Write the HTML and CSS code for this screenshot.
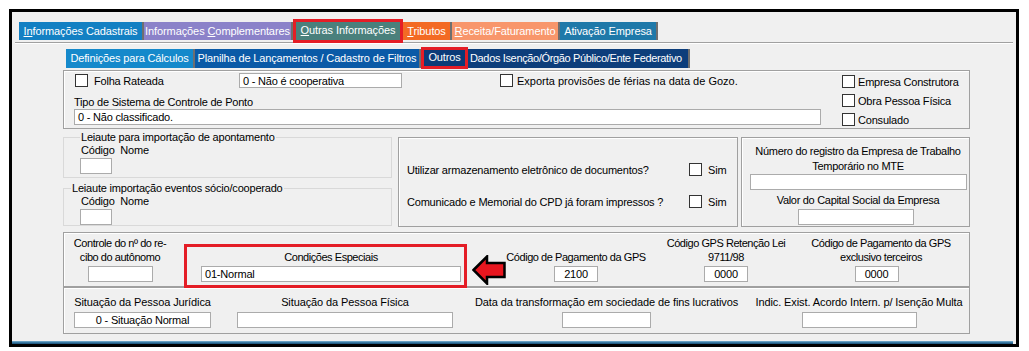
FILE: index.html
```html
<!DOCTYPE html>
<html>
<head>
    <meta charset="utf-8">
    <title>Outras Informações</title>
    <link rel="stylesheet" href="styles.css">
</head>
<body>
    <div class="window">
        <div class="main-tabs">
            <span class="tab t-cad"><u>In</u>formações Cadastrais</span>
            <span class="tab t-comp">Informações <u>C</u>omplementares</span>
            <span class="tab t-outras active"><u>O</u>utras Informações</span>
            <span class="tab t-trib"><u>T</u>ributos</span>
            <span class="tab t-rec"><u>R</u>eceita/Faturamento</span>
            <span class="tab t-ativ">Ativação Empresa</span>
        </div>
        <div class="tab-line"></div>

        <div class="sub-tabs">
            <span class="tab s-def">Definições para Cálculos</span>
            <span class="tab s-plan">Planilha de Lançamentos / Cadastro de Filtros</span>
            <span class="tab s-outros active">Outros</span>
            <span class="tab s-dados">Dados Isenção/Órgão Público/Ente Federativo</span>
        </div>

        <div class="panel">
            <div class="box top">
                <div class="top-left">
                    <div class="row1">
                        <span class="check check-folha"></span>
                        <span class="lbl-folha">Folha Rateada</span>
                        <span class="field f-coop">0 - Não é cooperativa</span>
                        <span class="check check-exporta"></span>
                        <span class="lbl-exporta">Exporta provisões de férias na data de Gozo.</span>
                    </div>
                    <div class="lbl-ponto">Tipo de Sistema de Controle de Ponto</div>
                    <span class="field f-ponto">0 - Não classificado.</span>
                </div>
                <div class="top-right">
                    <div class="check-row"><span class="check"></span>Empresa Construtora</div>
                    <div class="check-row"><span class="check"></span>Obra Pessoa Física</div>
                    <div class="check-row"><span class="check"></span>Consulado</div>
                </div>
            </div>

            <div class="middle">
                <div class="leiautes">
                    <fieldset class="group g-apont">
                        <legend>Leiaute para importação de apontamento</legend>
                        <div class="cod-nome">Código&nbsp; Nome</div>
                        <span class="field f-cod"></span>
                    </fieldset>
                    <fieldset class="group g-socio">
                        <legend>Leiaute importação eventos sócio/cooperado</legend>
                        <div class="cod-nome">Código&nbsp; Nome</div>
                        <span class="field f-cod"></span>
                    </fieldset>
                </div>

                <div class="box docs">
                    <div class="doc-row">
                        <span class="doc-text">Utilizar armazenamento eletrônico de documentos?</span>
                        <span class="check"></span>
                        <span class="sim">Sim</span>
                    </div>
                    <div class="doc-row">
                        <span class="doc-text">Comunicado e Memorial do CPD já foram impressos ?</span>
                        <span class="check"></span>
                        <span class="sim">Sim</span>
                    </div>
                </div>

                <div class="box mte">
                    <div class="mte-label">Número do registro da Empresa de Trabalho<br>Temporário no MTE</div>
                    <span class="field f-mte"></span>
                    <div class="mte-label capital">Valor do Capital Social da Empresa</div>
                    <span class="field f-capital"></span>
                </div>
            </div>

            <div class="box gps">
                <div class="col c-recibo">
                    <div class="col-label">Controle do nº do re-<br>cibo do autônomo</div>
                    <span class="field f-recibo"></span>
                </div>
                <div class="col c-cond">
                    <div class="col-label">Condições Especiais</div>
                    <span class="field f-cond">01-Normal</span>
                </div>
                <div class="col c-pag">
                    <div class="col-label">Código de Pagamento da GPS</div>
                    <span class="field f-num">2100</span>
                </div>
                <div class="col c-ret">
                    <div class="col-label">Código GPS Retenção Lei<br>9711/98</div>
                    <span class="field f-num">0000</span>
                </div>
                <div class="col c-terc">
                    <div class="col-label">Código de Pagamento da GPS<br>exclusivo terceiros</div>
                    <span class="field f-num f-terc">0000</span>
                </div>
            </div>

            <div class="box situacao">
                <div class="col c-pj">
                    <div class="col-label">Situação da Pessoa Jurídica</div>
                    <span class="field f-pj">0 - Situação Normal</span>
                </div>
                <div class="col c-pf">
                    <div class="col-label">Situação da Pessoa Física</div>
                    <span class="field f-pf"></span>
                </div>
                <div class="col c-data">
                    <div class="col-label">Data da transformação em sociedade de fins lucrativos</div>
                    <span class="field f-data"></span>
                </div>
                <div class="col c-indic">
                    <div class="col-label">Indic. Exist. Acordo Intern. p/ Isenção Multa</div>
                    <span class="field f-indic"></span>
                </div>
            </div>
        </div>

        <div class="bottom-line"></div>

        <!-- red annotations drawn over the form -->
        <div class="mark mark-outras"></div>
        <div class="mark mark-outros"></div>
        <div class="mark mark-cond"></div>
        <svg class="arrow" width="34" height="30" viewBox="0 0 34 30">
            <polygon points="1.5,15 15,1.5 15,8 32.5,8 32.5,22 15,22 15,28.5" fill="#e8161f" stroke="#000" stroke-width="2.5" stroke-linejoin="miter"/>
        </svg>
    </div>
</body>
</html>
```

FILE: styles.css
```css
body {
    margin: 0;
    background: #fff;
    font-family: "Liberation Sans", Arial, sans-serif;
    font-size: 11px;
    color: #000;
}
.window {
    position: relative;
    margin: 9px;
    width: 1004px;
    height: 332px;
    border: 3px solid #000;
    background: #f0f0f0;
}

/* tabs */
.main-tabs {
    display: flex;
    align-items: flex-end;
    height: 20px;
    padding: 8px 0 0 7px;
}
.tab {
    box-sizing: border-box;
    height: 18px;
    line-height: 18px;
    color: #fff;
    text-align: center;
    white-space: nowrap;
    letter-spacing: -0.1px;
    border-right: 2px solid #6f6f6f;
}
.tab u {
    text-decoration: underline;
}
.t-cad { width: 125px; background: #1380c3; }
.t-comp { width: 149px; background: #8b82c9; }
.t-outras { width: 110px; background: #4a807c; height: 22px; line-height: 20px; margin-bottom: -2px; border-right: none; }
.t-trib { width: 49px; background: #f36a24; }
.t-rec { width: 108px; background: #f8966b; }
.t-ativ { width: 98px; background: #1f79a9; }

.tab-line {
    margin: 2px 3px 0 3px;
    border-top: 1px solid #a0a0a0;
    border-bottom: 1px solid #fff;
}

.sub-tabs {
    display: flex;
    height: 19px;
    margin: 5px 0 0 54px;
}
.sub-tabs .tab {
    height: 19px;
    line-height: 18px;
    letter-spacing: -0.15px;
}
.s-def { width: 129px; background: #1589cb; }
.s-plan { width: 226px; background: #0a5aa7; }
.s-outros { width: 47px; background: #0b3b78; border-right: none; line-height: 16px !important; }
.s-dados { width: 222px; background: #0d3e7b; text-align: left; padding-left: 2px; letter-spacing: -0.35px !important; }

/* panel */
.panel {
    margin: 2px 0 0 51px;
    width: 907px;
    letter-spacing: -0.2px;
}
.box {
    box-sizing: border-box;
    border: 1px solid #a0a0a0;
    box-shadow: inset 1px 1px #fff;
}
.field {
    display: block;
    box-sizing: border-box;
    height: 16px;
    line-height: 14px;
    padding: 0 3px;
    background: #fff;
    border: 1px solid #ababab;
    white-space: nowrap;
}
.check {
    display: inline-block;
    box-sizing: border-box;
    width: 13px;
    height: 13px;
    background: #fff;
    border: 1px solid #333;
    flex: none;
}

.top {
    display: flex;
    height: 59px;
    padding: 2px 0 0 10px;
}
.top-left {
    width: 747px;
}
.row1 {
    display: flex;
    align-items: center;
    height: 15px;
    white-space: nowrap;
}
.check-folha { margin-left: 1px; }
.lbl-folha { margin-left: 6px; width: 145px; }
.f-coop { width: 163px; height: 15px; }
.check-exporta { margin-left: 98px; }
.lbl-exporta { margin-left: 4px; letter-spacing: 0; }
.lbl-ponto {
    margin-top: 8px;
    line-height: 13px;
}
.f-ponto { width: 747px; }
.top-right {
    display: flex;
    flex-direction: column;
    gap: 6px;
    margin-left: 21px;
    padding-top: 2px;
}
.check-row {
    display: flex;
    align-items: center;
    gap: 3px;
    height: 13px;
    white-space: nowrap;
}

/* middle */
.middle {
    display: flex;
    height: 103px;
}
.leiautes {
    width: 329px;
}
.group {
    margin: 0;
    padding: 0 0 3px 16px;
    border: 1px solid #d9d9d9;
}
.group legend {
    padding: 0 1px;
    line-height: 13px;
}
.g-apont { margin-top: 2px; }
.g-socio { margin-top: 4px; padding-bottom: 0; }
.g-socio legend { margin-left: -9px; }
.cod-nome {
    line-height: 13px;
    padding-left: 1px;
}
.f-cod { width: 32px; margin-top: 1px; }

.docs {
    width: 340px;
    height: 90px;
    margin: 8px 0 0 6px;
    padding: 24px 0 0 8px;
}
.doc-row {
    display: flex;
    align-items: center;
    height: 15px;
    margin-bottom: 17px;
    white-space: nowrap;
}
.doc-text { width: 282px; }
.sim { margin-left: 6px; }

.mte {
    width: 229px;
    height: 90px;
    margin: 8px 0 0 3px;
    padding: 6px 3px 0 8px;
    text-align: center;
}
.mte-label {
    line-height: 15px;
    white-space: nowrap;
    letter-spacing: -0.3px;
}
.mte-label.capital {
    margin-top: 3px;
}
.f-mte { width: 217px; }
.f-capital { width: 116px; margin: 1px auto 0 48px; }

/* gps and situacao rows */
.gps {
    display: flex;
    align-items: flex-end;
    height: 55px;
    padding: 0 0 4px 4px;
}
.col {
    display: flex;
    flex-direction: column;
    align-items: center;
    text-align: center;
    white-space: nowrap;
}
.col-label {
    line-height: 14px;
}
.gps .col-label { letter-spacing: -0.45px; }
.gps .field { margin-top: 2px; }
.c-recibo { width: 104px; }
.f-recibo { width: 65px; }
.c-cond { width: 260px; margin-left: 29px; }
.f-cond { width: 260px; text-align: left; }
.c-pag { width: 142px; margin-left: 44px; }
.c-ret { width: 124px; margin-left: 17px; }
.c-terc { width: 144px; margin-left: 21px; }
.f-num { width: 44px; text-align: center; }
.f-terc { margin-right: 9px; }

.situacao {
    display: flex;
    height: 47px;
    padding: 7px 0 0 10px;
}
.situacao .col-label { letter-spacing: -0.1px; }
.situacao .field { margin-top: 3px; }
.c-pj { width: 137px; }
.f-pj { width: 137px; text-align: center; }
.c-pf { width: 216px; margin-left: 26px; }
.f-pf { width: 216px; }
.c-data { width: 267px; margin-left: 20px; }
.f-data { width: 89px; }
.c-indic { width: 206px; margin-left: 16px; }
.f-indic { width: 115px; }

.bottom-line {
    margin: 7px 3px 0 0;
    height: 3px;
    background: linear-gradient(#7fb2d2, #2d6f99 60%, #1d4f74);
}

/* annotations */
.mark {
    position: absolute;
    box-sizing: border-box;
    border: 3px solid #e41d26;
}
.mark-outras { left: 281px; top: 7px; width: 110px; height: 24px; }
.mark-outros { left: 409px; top: 35px; width: 47px; height: 22px; }
.mark-cond { left: 172px; top: 232px; width: 283px; height: 44px; }
.arrow {
    position: absolute;
    left: 460px;
    top: 243px;
}
```
